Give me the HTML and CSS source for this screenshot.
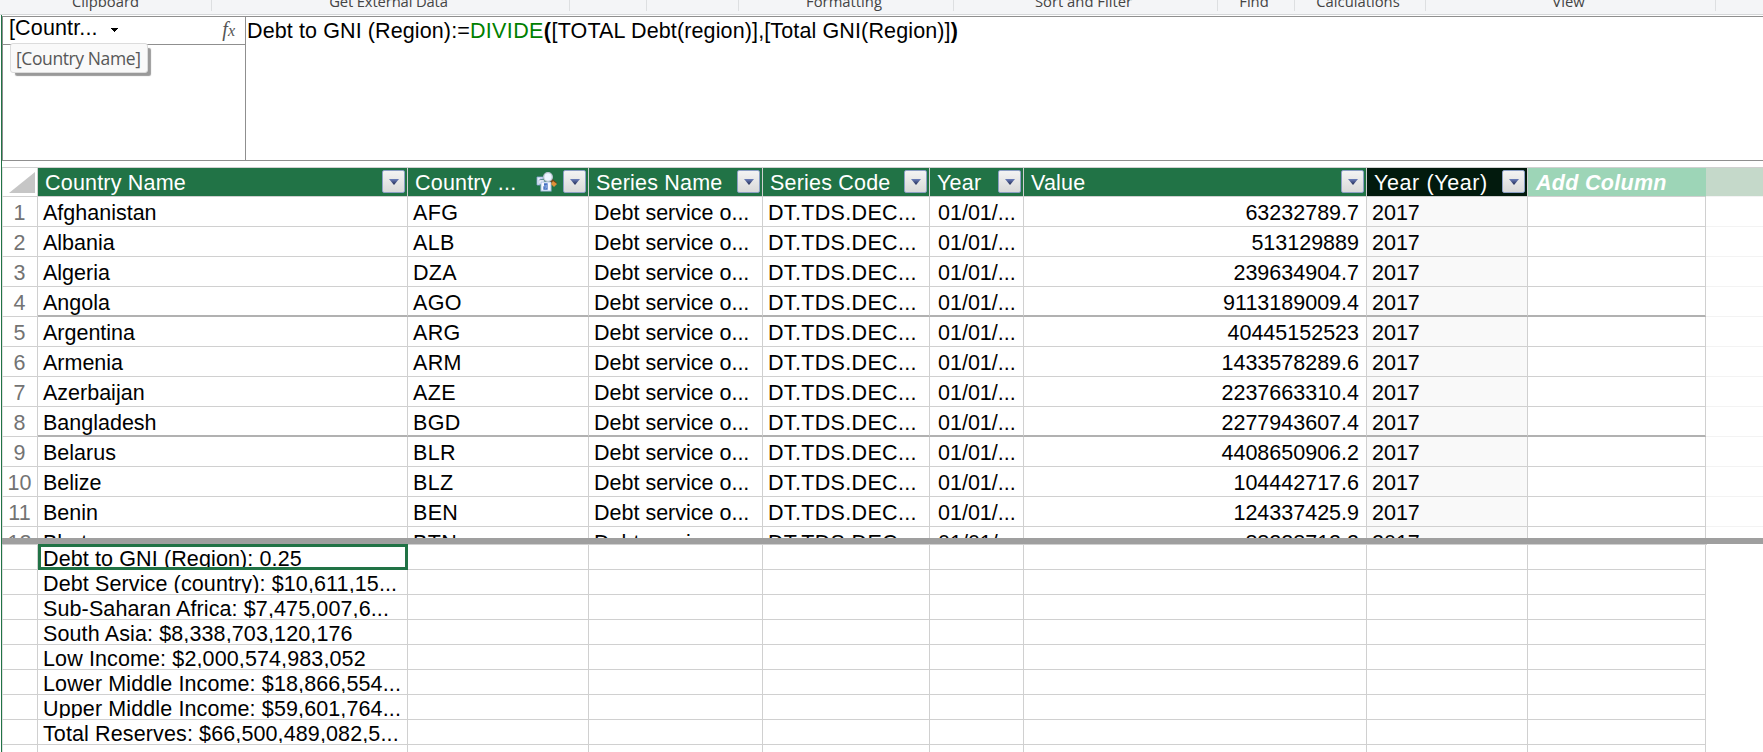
FILE: index.html
```html
<!DOCTYPE html>
<html lang="en">
<head>
<meta charset="utf-8">
<title>Data model</title>
<link rel="stylesheet" href="styles.css">
</head>
<body>
<div class="app">
  <div class="ribbon">
    <div class="group g-clipboard"><span>Clipboard</span></div>
    <div class="group g-external"><span>Get External Data</span></div>
    <div class="group g-gap1"></div>
    <div class="group g-gap2"></div>
    <div class="group g-format"><span>Formatting</span></div>
    <div class="group g-sort"><span>Sort and Filter</span></div>
    <div class="group g-find"><span>Find</span></div>
    <div class="group g-calc"><span>Calculations</span></div>
    <div class="group g-view"><span>View</span></div>
  </div>
  <div class="workspace">
    <div class="formula-bar">
      <div class="name-pane">
        <div class="name-box">
          <span class="name-text">[Countr...</span>
          <svg class="name-arrow" viewBox="0 0 8 4" width="8" height="4" shape-rendering="crispEdges"><path d="M0 0h8L4 4z"/></svg>
          <span class="fx">f<i>x</i></span>
        </div>
        <div class="tooltip">[Country Name]</div>
      </div>
      <div class="formula"><span class="f-name">Debt to GNI (Region):=</span><span class="fn">DIVIDE</span><b>(</b><span class="f-args">[TOTAL Debt(region)],[Total GNI(Region)]</span><b>)</b></div>
    </div>
    <div class="grid">
      <div class="row head">
        <div class="corner"><svg width="26" height="21" viewBox="0 0 26 21"><path d="M26 0V21H0z" fill="#c6c6c6"/></svg></div>
        <div class="th"><span>Country Name</span><i class="dd"></i></div>
        <div class="th"><span>Country ...</span>
          <svg class="rel" width="22" height="20" viewBox="0 0 22 20">
            <path d="M1 5h6v2H4v6H1z" fill="#e6edfa" stroke="#8ba5d6" stroke-width=".8"/>
            <path d="M3 8h5v4H3z" fill="#fff" stroke="#93a8d0" stroke-width=".6"/>
            <rect x="5" y="10" width="10" height="9" fill="#f6f9ff" stroke="#a9bfe5"/>
            <path d="M8 12h3v5H8v-2h2M8 13h2" fill="none" stroke="#416fc3" stroke-width="1.3"/>
            <path d="M15 8l5 4" stroke="#704414" stroke-width="3"/>
            <path d="M17 9l4 3-3 3-3-3z" fill="#e0913a"/>
            <circle cx="12" cy="5" r="4.3" fill="#edf6ff" stroke="#bec7d6" stroke-width="1.3"/>
          </svg><i class="dd"></i></div>
        <div class="th"><span>Series Name</span><i class="dd"></i></div>
        <div class="th"><span>Series Code</span><i class="dd"></i></div>
        <div class="th"><span>Year</span><i class="dd"></i></div>
        <div class="th"><span>Value</span><i class="dd"></i></div>
        <div class="th selected"><span>Year (Year)</span><i class="dd"></i></div>
        <div class="th add"><span>Add Column</span></div>
        <div class="rest"></div>
      </div>
      <div class="rows">
        <div class="row"><div class="n">1</div><div>Afghanistan</div><div class="code">AFG</div><div>Debt service o...</div><div class="code">DT.TDS.DEC...</div><div class="date">01/01/...</div><div class="num">63232789.7</div><div class="calc">2017</div><div></div><div class="rest"></div></div>
        <div class="row"><div class="n">2</div><div>Albania</div><div class="code">ALB</div><div>Debt service o...</div><div class="code">DT.TDS.DEC...</div><div class="date">01/01/...</div><div class="num">513129889</div><div class="calc">2017</div><div></div><div class="rest"></div></div>
        <div class="row"><div class="n">3</div><div>Algeria</div><div class="code">DZA</div><div>Debt service o...</div><div class="code">DT.TDS.DEC...</div><div class="date">01/01/...</div><div class="num">239634904.7</div><div class="calc">2017</div><div></div><div class="rest"></div></div>
        <div class="row band"><div class="n">4</div><div>Angola</div><div class="code">AGO</div><div>Debt service o...</div><div class="code">DT.TDS.DEC...</div><div class="date">01/01/...</div><div class="num">9113189009.4</div><div class="calc">2017</div><div></div><div class="rest"></div></div>
        <div class="row"><div class="n">5</div><div>Argentina</div><div class="code">ARG</div><div>Debt service o...</div><div class="code">DT.TDS.DEC...</div><div class="date">01/01/...</div><div class="num">40445152523</div><div class="calc">2017</div><div></div><div class="rest"></div></div>
        <div class="row"><div class="n">6</div><div>Armenia</div><div class="code">ARM</div><div>Debt service o...</div><div class="code">DT.TDS.DEC...</div><div class="date">01/01/...</div><div class="num">1433578289.6</div><div class="calc">2017</div><div></div><div class="rest"></div></div>
        <div class="row"><div class="n">7</div><div>Azerbaijan</div><div class="code">AZE</div><div>Debt service o...</div><div class="code">DT.TDS.DEC...</div><div class="date">01/01/...</div><div class="num">2237663310.4</div><div class="calc">2017</div><div></div><div class="rest"></div></div>
        <div class="row band"><div class="n">8</div><div>Bangladesh</div><div class="code">BGD</div><div>Debt service o...</div><div class="code">DT.TDS.DEC...</div><div class="date">01/01/...</div><div class="num">2277943607.4</div><div class="calc">2017</div><div></div><div class="rest"></div></div>
        <div class="row"><div class="n">9</div><div>Belarus</div><div class="code">BLR</div><div>Debt service o...</div><div class="code">DT.TDS.DEC...</div><div class="date">01/01/...</div><div class="num">4408650906.2</div><div class="calc">2017</div><div></div><div class="rest"></div></div>
        <div class="row"><div class="n">10</div><div>Belize</div><div class="code">BLZ</div><div>Debt service o...</div><div class="code">DT.TDS.DEC...</div><div class="date">01/01/...</div><div class="num">104442717.6</div><div class="calc">2017</div><div></div><div class="rest"></div></div>
        <div class="row"><div class="n">11</div><div>Benin</div><div class="code">BEN</div><div>Debt service o...</div><div class="code">DT.TDS.DEC...</div><div class="date">01/01/...</div><div class="num">124337425.9</div><div class="calc">2017</div><div></div><div class="rest"></div></div>
        <div class="row"><div class="n">12</div><div>Bhutan</div><div class="code">BTN</div><div>Debt service o...</div><div class="code">DT.TDS.DEC...</div><div class="date">01/01/...</div><div class="num">88228712.2</div><div class="calc">2017</div><div></div><div class="rest"></div></div>
      </div>
    </div>
    <div class="splitter"></div>
    <div class="measures">
      <div class="row m"><div></div><div class="active"><span>Debt to GNI (Region): 0.25</span></div><div></div><div></div><div></div><div></div><div></div><div></div><div></div></div>
      <div class="row m"><div></div><div><span>Debt Service (country): $10,611,15...</span></div><div></div><div></div><div></div><div></div><div></div><div></div><div></div></div>
      <div class="row m"><div></div><div><span>Sub-Saharan Africa: $7,475,007,6...</span></div><div></div><div></div><div></div><div></div><div></div><div></div><div></div></div>
      <div class="row m"><div></div><div><span>South Asia: $8,338,703,120,176</span></div><div></div><div></div><div></div><div></div><div></div><div></div><div></div></div>
      <div class="row m"><div></div><div><span>Low Income: $2,000,574,983,052</span></div><div></div><div></div><div></div><div></div><div></div><div></div><div></div></div>
      <div class="row m"><div></div><div><span>Lower Middle Income: $18,866,554...</span></div><div></div><div></div><div></div><div></div><div></div><div></div><div></div></div>
      <div class="row m"><div></div><div><span>Upper Middle Income: $59,601,764...</span></div><div></div><div></div><div></div><div></div><div></div><div></div><div></div></div>
      <div class="row m"><div></div><div><span>Total Reserves: $66,500,489,082,5...</span></div><div></div><div></div><div></div><div></div><div></div><div></div><div></div></div>
      <div class="row m"><div></div><div></div><div></div><div></div><div></div><div></div><div></div><div></div><div></div></div>
    </div>
  </div>
</div>
</body>
</html>
```
FILE: styles.css
```css
* { box-sizing: border-box; }
html, body { margin: 0; height: 100%; overflow: hidden; background: #fff; }
.app {
  height: 752px;
  overflow: hidden;
  font: 21.5px/30px "Liberation Sans", Arial, sans-serif;
  color: #000;
  white-space: nowrap;
}

/* Ribbon group captions */
.ribbon {
  display: flex;
  height: 15px;
  background: #f4f5f7;
  border-bottom: 1px solid #d5d7d9;
  font: 14.8px/20px "Open Sans", "Noto Sans", sans-serif;
  color: #444;
}
.group {
  flex: none;
  display: flex;
  justify-content: center;
  height: 11px;
  border-right: 1px solid #dddfe1;
}
.group span { margin-top: -9px; height: 20px; }
.g-clipboard { width: 212px; }
.g-external { width: 358px; padding-right: 4px; letter-spacing: -.15px; }
.g-gap1 { width: 77px; }
.g-gap2 { width: 92px; }
.g-format { width: 215px; padding-right: 4px; }
.g-sort { width: 264px; padding-right: 4px; }
.g-find { width: 77px; padding-right: 4px; }
.g-calc { width: 131px; padding-right: 4px; }
.g-view { width: 290px; padding-right: 4px; }

.workspace {
  margin-left: 1px;
  padding-top: 1px;
  border-left: 1px solid #217346;
}

/* Formula bar */
.formula-bar {
  display: flex;
  height: 145px;
  border: solid #8f8f8f;
  border-width: 1px 0 1px 1px;
}
.name-pane { position: relative; width: 243px; border-right: 1px solid #8f8f8f; }
.name-box {
  display: flex;
  height: 28px;
  padding: 0 10px 0 6px;
  border-bottom: 1px solid #8f8f8f;
  line-height: 22px;
}
.name-text { width: 89px; letter-spacing: .15px; }
.name-arrow { margin: 11px 0 0 12px; }
.fx {
  margin-left: auto;
  font: italic 20px/24px "Liberation Serif", serif;
  color: #555;
}
.fx i { font-size: 16px; }
.tooltip {
  position: absolute;
  left: 7px;
  top: 26px;
  width: 138px;
  height: 30px;
  padding-left: 5px;
  border: 1px solid #dcdcdc;
  border-radius: 3px;
  background: #f9f9f9;
  box-shadow: 4px 4px 1px -1px #999;
  font: 17.5px/29px "Open Sans", "Noto Sans", sans-serif;
  letter-spacing: -.4px;
  color: #575757;
}
.formula { padding-left: 1px; line-height: 28px; }
.f-name { letter-spacing: .11px; }
.fn { color: #008000; letter-spacing: .36px; }
.formula b { letter-spacing: .7px; }
.f-args { letter-spacing: .13px; }

/* Data grid */
.grid { height: 371px; margin-top: 6px; overflow: hidden; }
.row {
  display: grid;
  grid-template-columns: 36px 370px 181px 174px 167px 94px 343px 161px 178px 57px;
  height: 30px;
}
.row > div {
  padding: 1px 0 0 5px;
  overflow: hidden;
  border: solid #d0d0d0;
  border-width: 0 1px 1px 0;
}
.row > .n { padding: 1px 1px 0 0; border-left: 1px solid #e1e1e1; text-align: center; color: #737373; }
.row > .code { letter-spacing: .33px; }
.row > .date { padding-left: 8px; }
.row > .num { padding-right: 7px; text-align: right; }
.row > .calc { padding-left: 5px; background: #f9f9f9; }
.row > .rest { border-right: 0; border-color: #f3f3f3; }
.band > div:not(.n):not(.rest) { border-bottom: 2px solid #b1b1b1; }

.head { border-top: 1px solid #d0d0d0; }
.head > .th {
  display: flex;
  height: 29px;
  padding: 0 2px 0 7px;
  background: #217346;
  color: #fff;
  letter-spacing: .2px;
}
.head > .selected { background: #021a0d; letter-spacing: .6px; }
.head > .add {
  background: #9dd5b7;
  border-right-color: #9dd5b7;
  font-weight: bold;
  font-style: italic;
  letter-spacing: .3px;
  padding-left: 8px;
}
.head > .rest { background: #c5d9ca; }
.head > .corner { padding: 4px 0 0 6px; border-left: 1px solid #e1e1e1; }
.corner svg { display: block; }
.rel { margin: 4px 5px 0 auto; }
.dd {
  flex: none;
  width: 23px;
  height: 23px;
  margin: 2px 0 0 auto;
  border: 1px solid #8c9fc4;
  border-radius: 2px;
  background: linear-gradient(#f3f3f3, #d9d9d9);
}
.rel + .dd { margin-left: 0; }
.dd::after {
  content: "";
  display: block;
  width: 10px;
  height: 6px;
  margin: 8px 0 0 6px;
  background: linear-gradient(#6d80bd, #1e2750);
  clip-path: polygon(0 0, 100% 0, 50% 100%);
}
.splitter { height: 6px; background: #9f9f9f; }

/* Measure area */
.measures { width: 1705px; border-top: 1px solid #d0d0d0; letter-spacing: .12px; }
.measures .row { height: 25px; }
.measures .row > div { padding-top: 0; }
.measures .row > div:first-child { border-left: 1px solid #e1e1e1; }
.measures span { display: block; height: 23px; line-height: 28px; overflow: hidden; }
.measures .row > .active {
  position: relative;
  margin-top: -1px;
  padding: 0 0 0 2px;
  border: 3px solid #217346;
}
.active span { margin-top: -2px; height: 22px; }
```
